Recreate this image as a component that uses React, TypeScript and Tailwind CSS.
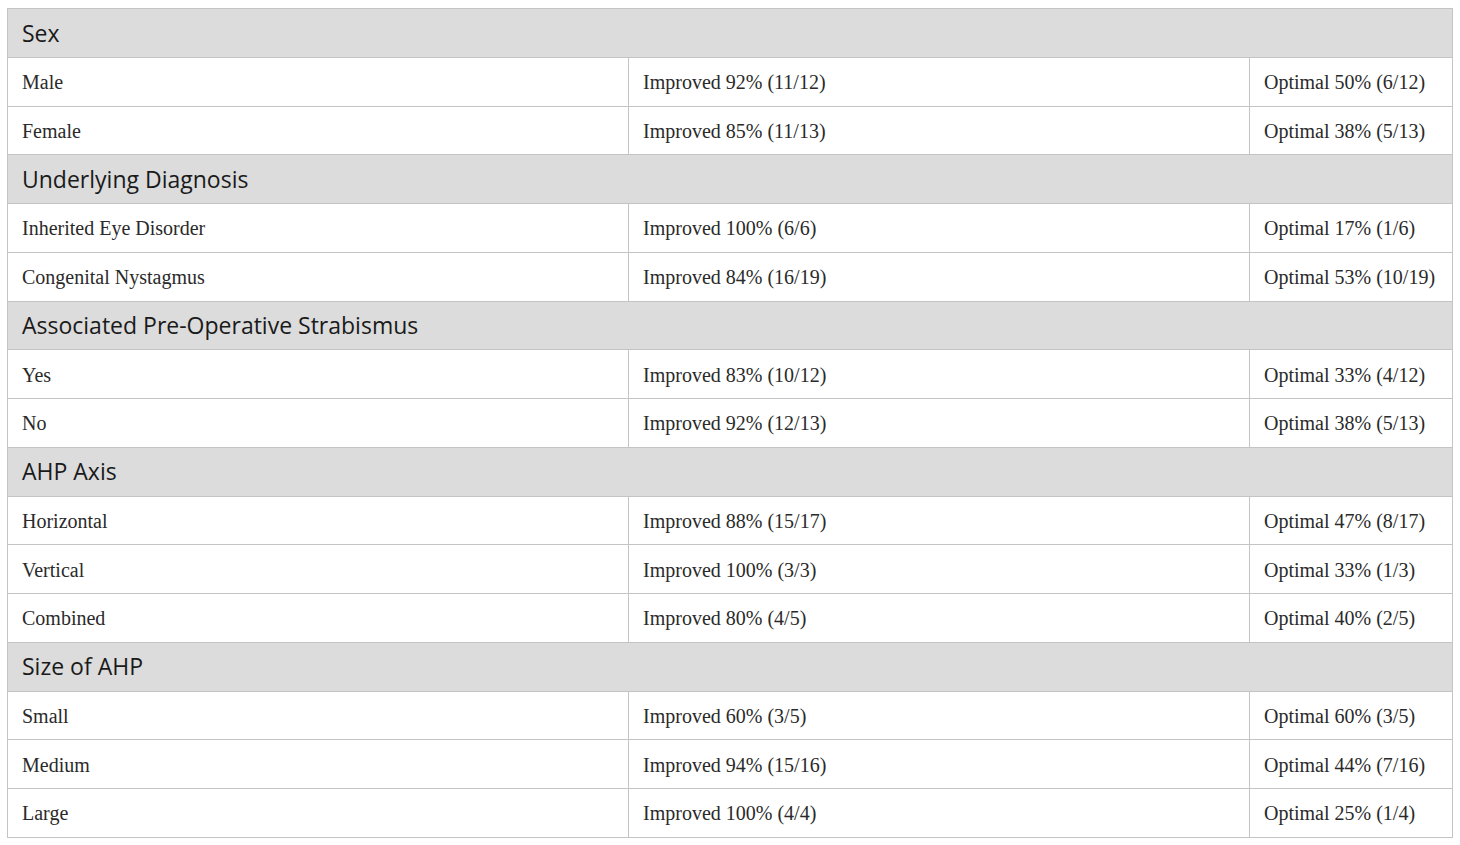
import { Fragment } from "react"

type Row = [string, string, string]

const sections: { title: string; rows: Row[] }[] = [
  {
    title: "Sex",
    rows: [
      ["Male", "Improved 92% (11/12)", "Optimal 50% (6/12)"],
      ["Female", "Improved 85% (11/13)", "Optimal 38% (5/13)"],
    ],
  },
  {
    title: "Underlying Diagnosis",
    rows: [
      ["Inherited Eye Disorder", "Improved 100% (6/6)", "Optimal 17% (1/6)"],
      ["Congenital Nystagmus", "Improved 84% (16/19)", "Optimal 53% (10/19)"],
    ],
  },
  {
    title: "Associated Pre-Operative Strabismus",
    rows: [
      ["Yes", "Improved 83% (10/12)", "Optimal 33% (4/12)"],
      ["No", "Improved 92% (12/13)", "Optimal 38% (5/13)"],
    ],
  },
  {
    title: "AHP Axis",
    rows: [
      ["Horizontal", "Improved 88% (15/17)", "Optimal 47% (8/17)"],
      ["Vertical", "Improved 100% (3/3)", "Optimal 33% (1/3)"],
      ["Combined", "Improved 80% (4/5)", "Optimal 40% (2/5)"],
    ],
  },
  {
    title: "Size of AHP",
    rows: [
      ["Small", "Improved 60% (3/5)", "Optimal 60% (3/5)"],
      ["Medium", "Improved 94% (15/16)", "Optimal 44% (7/16)"],
      ["Large", "Improved 100% (4/4)", "Optimal 25% (1/4)"],
    ],
  },
]

export default function App() {
  return (
    <div className="min-h-screen bg-white pl-[7px] pt-[8px]">
      <table className="w-[1446px] table-fixed border-collapse">
        <colgroup>
          <col className="w-[621px]" />
          <col className="w-[621px]" />
          <col />
        </colgroup>
        <tbody>
          {sections.map((section) => (
            <Fragment key={section.title}>
              <tr className="h-[48.75px] bg-[#dcdcdc]">
                <td
                  colSpan={3}
                  className="border border-[#c4c4c4] px-[14px] font-['Open_Sans',sans-serif] text-[23px] text-[#1a1a1a]"
                >
                  {section.title}
                </td>
              </tr>
              {section.rows.map((row) => (
                <tr key={row[0]} className="h-[48.75px] bg-white">
                  {row.map((cell, i) => (
                    <td
                      key={i}
                      className="border border-[#c4c4c4] px-[14px] pt-[1px] font-['Liberation_Serif',serif] text-[20px] text-[#2a2a2a]"
                    >
                      {cell}
                    </td>
                  ))}
                </tr>
              ))}
            </Fragment>
          ))}
        </tbody>
      </table>
    </div>
  )
}
